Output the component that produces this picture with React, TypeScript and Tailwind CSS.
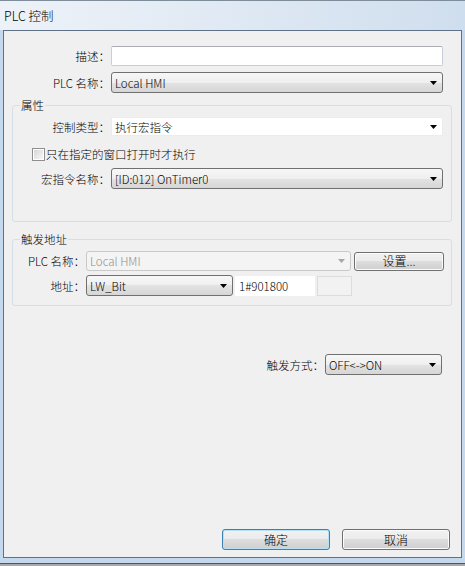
import clsx from "clsx";

const font = { fontFamily: "'Noto Sans CJK SC', 'Noto Sans', sans-serif" };

function Arrow({ disabled }: { disabled?: boolean }) {
  return (
    <svg width="7" height="4" viewBox="0 0 7 4" className="shrink-0">
      <polygon points="0,0 7,0 3.5,4" fill={disabled ? "#a6a6a6" : "#000000"} />
    </svg>
  );
}

function Combo({
  value,
  className,
  disabled,
  flat,
}: {
  value: string;
  className?: string;
  disabled?: boolean;
  flat?: boolean;
}) {
  return (
    <div
      className={clsx(
        "flex items-center justify-between rounded-[3px] border pl-[3px] pr-[5px]",
        disabled
          ? "border-[#c9c9c9] bg-[#f4f4f4] text-[#8d8d8d]"
          : flat
            ? "rounded-none border-[#ececec] bg-white"
            : "border-[#707070] bg-[linear-gradient(#f7f7f7,#efefef_50%,#e3e3e3_50%,#d6d6d6)]",
        className
      )}
    >
      <span className="truncate">{value}</span>
      <Arrow disabled={disabled} />
    </div>
  );
}

function Button({ label, focused, className }: { label: string; focused?: boolean; className?: string }) {
  return (
    <div
      className={clsx(
        "flex items-center justify-center rounded-[3px] border bg-[linear-gradient(#f2f2f2,#ebebeb_50%,#dddddd_50%,#cfcfcf)]",
        focused ? "border-[#3c7fb1] shadow-[inset_0_0_0_1px_#b6e2f7]" : "border-[#707070] shadow-[inset_0_0_0_1px_#fbfbfb]",
        className
      )}
    >
      {label}
    </div>
  );
}

function Label({ text, className }: { text: string; className?: string }) {
  return <div className={clsx("shrink-0 pr-[1px] text-right", className)}>{text}</div>;
}

export default function App() {
  return (
    <div
      className="flex h-[566px] w-[465px] flex-col bg-[#c4d8ee] text-[11.5px] font-light leading-[14px] text-black [text-spacing-trim:space-all]"
      style={font}
    >
      <div className="flex h-[30px] shrink-0 items-center border-t border-[#7f8c99] bg-[linear-gradient(90deg,#edf2f8,#e1eaf4_45%,#cfdeee)] pl-[4px] text-[12.5px]">
        PLC 控制
      </div>

      <div className="flex h-[528px] shrink-0 px-[3px]">
        <div className="flex w-[459px] flex-col border border-[#5e7186] bg-[#f0f0f0]">
          <div className="mt-[15px] flex h-[20px] items-center">
            <Label text="描述：" className="w-[107px]" />
            <div className="h-[20px] w-[332px] rounded-[2px] border border-[#c9ced6] border-t-[#abadb3] bg-white" />
          </div>

          <div className="mt-[6px] flex h-[21px] items-center">
            <Label text="PLC 名称：" className="w-[107px]" />
            <Combo value="Local HMI" className="h-[21px] w-[332px]" />
          </div>

          <fieldset className="ml-[8px] mt-[6px] w-[440px] rounded-[3px] border border-[#d5dfe5] pb-[32px]">
            <legend className="ml-[7px] px-[1px] leading-[12px]">属性</legend>
            <div className="mt-[6px] flex h-[19px] items-center">
              <Label text="控制类型：" className="w-[98px]" />
              <Combo value="执行宏指令" flat className="h-[19px] w-[332px]" />
            </div>
            <div className="ml-[19px] mt-[11px] flex h-[14px] items-center gap-[1px]">
              <div className="flex h-[13px] w-[13px] items-center justify-center border border-[#8f8f8f] bg-white">
                <div className="h-[9px] w-[9px] bg-[linear-gradient(135deg,#d7d7d7,#f7f7f7)]" />
              </div>
              <span>只在指定的窗口打开时才执行</span>
            </div>
            <div className="mt-[7px] flex h-[21px] items-center">
              <Label text="宏指令名称：" className="w-[98px]" />
              <Combo value="[ID:012] OnTimer0" className="h-[21px] w-[332px]" />
            </div>
          </fieldset>

          <fieldset className="ml-[8px] mt-[11px] w-[440px] rounded-[3px] border border-[#d5dfe5] pb-[9px]">
            <legend className="ml-[7px] px-[1px] leading-[12px]">触发地址</legend>
            <div className="mt-[6px] flex h-[20px] items-center">
              <Label text="PLC 名称：" className="w-[73px]" />
              <Combo value="Local HMI" disabled className="h-[20px] w-[265px]" />
              <Button label="设置..." className="ml-[3px] h-[19px] w-[90px] text-[12px]" />
            </div>
            <div className="mt-[4px] flex h-[21px] items-center">
              <Label text="地址：" className="w-[73px]" />
              <Combo value="LW_Bit" className="h-[21px] w-[147px]" />
              <div className="ml-[2px] flex h-[20px] w-[80px] items-center bg-white pl-[4px]">1#901800</div>
              <div className="ml-[2px] h-[20px] w-[35px] border border-[#dcdcdc] bg-[#f2f2f2]" />
            </div>
          </fieldset>

          <div className="mt-[48px] flex h-[21px] items-center">
            <Label text="触发方式：" className="w-[321px]" />
            <Combo value="OFF<->ON" className="h-[21px] w-[117px]" />
          </div>

          <div className="mb-[7px] mt-auto flex h-[21px] items-center pl-[218px]">
            <Button label="确定" focused className="h-[21px] w-[108px] text-[12px]" />
            <Button label="取消" className="ml-[12px] h-[21px] w-[108px] text-[12px]" />
          </div>
        </div>
      </div>

      <div className="mt-[5px] h-px bg-[#4a5664]" />
      <div className="flex-1 bg-[#a9a9a9]" />
    </div>
  );
}
